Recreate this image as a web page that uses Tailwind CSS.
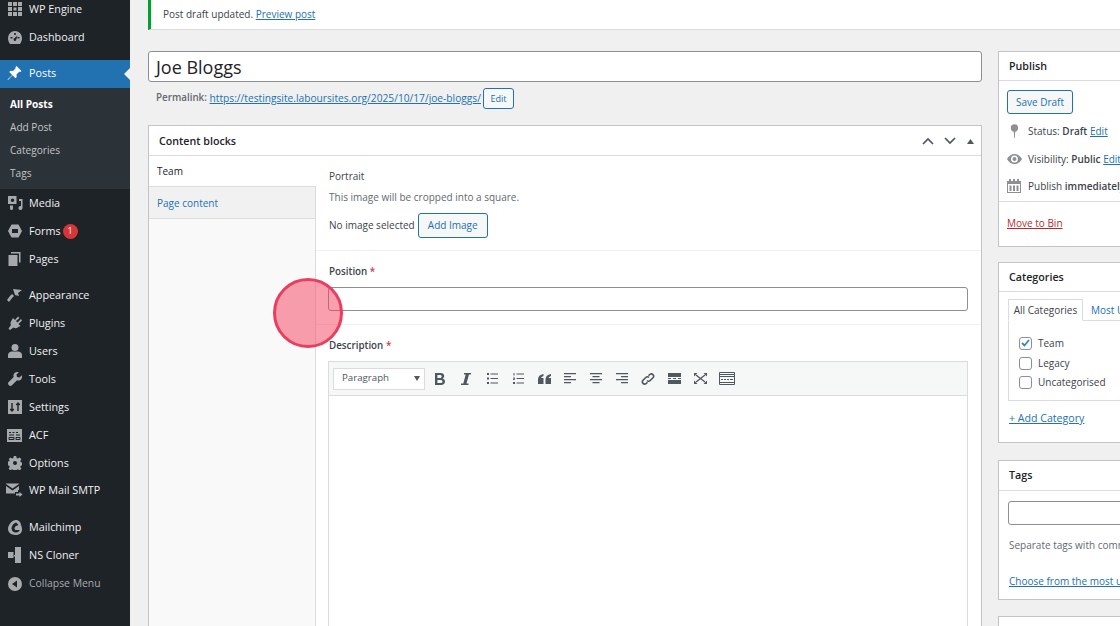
<!DOCTYPE html>
<html lang="en">
<head>
  <meta charset="UTF-8" />
  <title>Edit Post</title>
  <script src="https://cdn.jsdelivr.net/npm/@tailwindcss/browser@4"></script>
</head>
<body class="bg-[#f0f0f1] h-[626px] w-[1120px] overflow-hidden relative font-['Open_Sans',sans-serif] text-[10px] text-[#3c434a]">
<div class="flex h-[626px]">
  <!-- Sidebar -->
  <aside class="w-[130px] shrink-0 bg-[#1d2327] text-[#f0f0f1] text-[10.800px] overflow-hidden">
    <div class="-mt-[5px]">
      <div class="flex items-center h-[28px]"><span class="w-[29px] flex justify-center"><svg width="14" height="14" viewBox="0 0 14 14" fill="#a7aaad"><path d="M0 0h4v4H0zM5 0h4v4H5zM10 0h4v4h-4zM0 5h4v4H0zM10 5h4v4h-4zM0 10h4v4H0zM5 10h4v4H5zM10 10h4v4h-4zM5.500 5.500h3v3h-3z"/></svg></span>WP Engine</div>
      <div class="flex items-center h-[28px]"><span class="w-[29px] flex justify-center"><svg width="14" height="13" viewBox="0 0 14 13" fill="#a7aaad"><path fill-rule="evenodd" d="M7 0a7 7 0 0 0-7 7c0 2.300.8 4.300 2 6h10c1.200-1.700 2-3.700 2-6a7 7 0 0 0-7-7zM6.200 2v2h1.600V2zM2.500 6v1.500h2V6zM9.500 6v1.500h2V6zM7 10a1.500 1.500 0 0 1-1-2.600L9.500 4.500 8.300 8.400A1.500 1.500 0 0 1 7 10z"/></svg></span>Dashboard</div>
    </div>
    <div class="mt-[9px] h-[28px] pb-[1px] bg-[#2271b1] text-white flex items-center relative"><span class="w-[29px] flex justify-center"><svg width="15" height="15" viewBox="0 0 15 15" fill="#fff"><path d="M9.500 0l5 5-1.300 1-1-.3-2.700 2.700.2 2.600-1.200 1.200-3-3L1 14l-.5-.5 4.700-4.500-3-3 1.200-1.200 2.600.2L8.700 2.300l-.3-1z"/></svg></span>Posts<span class="absolute right-0 top-[8px] w-0 h-0 border-y-[6px] border-y-transparent border-r-[6px] border-r-[#f0f0f1]"></span></div>
    <div class="bg-[#2c3338] h-[101px] pt-[5px] pl-[10px] text-[#c3c4c7] text-[10.100px] flex flex-col">
      <div class="h-[23px] flex items-center font-bold text-white">All Posts</div>
      <div class="h-[23px] flex items-center">Add Post</div>
      <div class="h-[23px] flex items-center">Categories</div>
      <div class="h-[23px] flex items-center">Tags</div>
    </div>
    <div class="flex items-center h-[28px]"><span class="w-[29px] flex justify-center"><svg width="16" height="14" viewBox="0 0 16 14" fill="#a7aaad"><path d="M1 0h3l1-1h2l1 1h1.500v8H1zM5.500 2.500a1.800 1.800 0 1 0 0 3.600 1.800 1.800 0 0 0 0-3.600zM12 3h3.500v9a2 2 0 1 1-1.500-2V5h-2zM3 9.500h3v3a1.500 1.500 0 1 1-3 0z" fill-rule="evenodd"/></svg></span>Media</div>
    <div class="flex items-center h-[28px]"><span class="w-[29px] flex justify-center"><svg width="14" height="14" viewBox="0 0 14 14" fill="#a7aaad"><path fill-rule="evenodd" d="M3.500 .5h7L14 7l-3.500 6.500h-7L0 7zM4 5v4h6V5z"/></svg></span>Forms<span class="ml-[2px] w-[15px] h-[15px] rounded-full bg-[#d63638] text-white text-[9px] flex items-center justify-center">1</span></div>
    <div class="flex items-center h-[28px]"><span class="w-[29px] flex justify-center"><svg width="13" height="14" viewBox="0 0 13 14" fill="#a7aaad"><path d="M3 0h9.500v10.500H11V1.500H3zM.5 3h9v11h-9z"/></svg></span>Pages</div>
    <div class="mt-[8px] flex items-center h-[28px]"><span class="w-[29px] flex justify-center"><svg width="15" height="14" viewBox="0 0 15 14" fill="#a7aaad"><path d="M6 1l9 1-4 3 1 3-4-1zM5 6l2 2-2 2-3 4-2-2 3-4z"/></svg></span>Appearance</div>
    <div class="flex items-center h-[28px]"><span class="w-[29px] flex justify-center"><svg width="14" height="14" viewBox="0 0 14 14" fill="#a7aaad"><path d="M5 2l2 2 3-3.500 1.500 1.500L8 5l1.500 1.500L13 3l1 1.500L10.500 8l2 2-2 1c-2 1.500-4 1.500-5 .5L2 14l-1.500-1.500L3 9c-1-1.500-.5-3 .5-4.500z"/></svg></span>Plugins</div>
    <div class="flex items-center h-[28px]"><span class="w-[29px] flex justify-center"><svg width="14" height="14" viewBox="0 0 14 14" fill="#a7aaad"><circle cx="7" cy="3.500" r="3.500"/><path d="M0 14v-3c0-2 2-3.500 4-3.500h6c2 0 4 1.500 4 3.500v3z"/></svg></span>Users</div>
    <div class="flex items-center h-[28px]"><span class="w-[29px] flex justify-center"><svg width="14" height="14" viewBox="0 0 14 14" fill="#a7aaad"><path d="M13.800 3.200L11.500 5.500 9 5 8.500 2.500 10.800.2C9-.4 7 .2 6 1.700c-.7 1-.7 2.300-.3 3.300L.5 10.300c-.6.700-.6 1.800 0 2.500l.7.700c.7.600 1.800.6 2.500 0L9 8.300c1 .4 2.300.4 3.300-.3 1.500-1 2.100-3 1.500-4.800z"/></svg></span>Tools</div>
    <div class="flex items-center h-[28px]"><span class="w-[29px] flex justify-center"><svg width="14" height="14" viewBox="0 0 14 14"><path d="M0 0h14v14H0z" fill="#a7aaad"/><path d="M4 3v8M2.300 9L4 11l1.700-2M10 11V3M8.300 5L10 3l1.700 2" stroke="#1d2327" stroke-width="1.400" fill="none"/></svg></span>Settings</div>
    <div class="flex items-center h-[28px]"><span class="w-[29px] flex justify-center"><svg width="15" height="13" viewBox="0 0 15 13"><path d="M0 0h15v13H0z" fill="#a7aaad"/><path d="M2 3.500h2M5.500 3.500h2M9 3.500h2M2 6h5M9 6h4M2 8.500h5v2H2zM9 8.500h4v2H9z" stroke="#1d2327" stroke-width="1" fill="none"/></svg></span>ACF</div>
    <div class="flex items-center h-[28px]"><span class="w-[29px] flex justify-center"><svg width="14" height="14" viewBox="0 0 14 14" fill="#a7aaad"><path fill-rule="evenodd" d="M5.800 0h2.400l.4 2 1.300.6L11.700 1.500l1.700 1.700-1.100 1.800.6 1.300 2.100.5v2.400l-2.100.4-.6 1.300 1.100 1.800-1.700 1.700-1.800-1.100-1.300.6-.4 2.100H5.800l-.4-2.100-1.300-.6-1.800 1.100-1.700-1.700 1.100-1.800-.6-1.300-2.100-.4V5.800l2.100-.5.600-1.300L.6 3.200l1.700-1.700 1.800 1.100 1.300-.6zM7 5a2 2 0 1 0 0 4 2 2 0 0 0 0-4z"/></svg></span>Options</div>
    <div class="-mt-[1px] flex items-center h-[28px]"><span class="w-[29px] flex justify-center"><svg width="17" height="14" viewBox="0 0 17 14" fill="#a7aaad"><path d="M0 1l6.500 4.500L13 1v-.5H0zM0 3v7.500h9V9h3V7h1V3L6.500 7.500z"/><path d="M10 10.500h3.500V9l3 2.500-3 2.500v-1.500H10z"/></svg></span>WP Mail SMTP</div>
    <div class="mt-[9px] flex items-center h-[28px]"><span class="w-[29px] flex justify-center"><svg width="14" height="15" viewBox="0 0 14 15" fill="#a7aaad"><path fill-rule="evenodd" d="M8 0c2 0 5 2 5 5 1 2 1 4 1 5 0 3-3 5-6.500 5C3 15 0 12 0 9c0-4 4-9 8-9zM8 2.500C6 3 4 5 3.500 8c0 2.500 1.500 4.500 4.500 4.500 2 0 3.500-1 3.500-2.500H8C6.500 10 6 8 7 7s3-2 3.500-1.500C10 4 9 3 8 2.500z"/></svg></span>Mailchimp</div>
    <div class="flex items-center h-[28px]"><span class="w-[29px] flex justify-center"><svg width="13" height="16" viewBox="0 0 13 16" fill="#a7aaad"><path d="M7 0h6v16H7V9.500H6V8h1zM0 5h5.500v6H0z"/></svg></span>NS Cloner</div>
    <div class="flex items-center h-[28px] pt-[1px] text-[#a7aaad] text-[10.400px]"><span class="w-[29px] flex justify-center"><svg width="14" height="14" viewBox="0 0 14 14" fill="#a7aaad"><path fill-rule="evenodd" d="M7 0a7 7 0 1 1 0 14A7 7 0 0 1 7 0zm2 3.500L4 7l5 3.500z"/></svg></span>Collapse Menu</div>
  </aside>

  <!-- Main -->
  <main class="w-[990px] shrink-0 pl-[18px] overflow-hidden">
    <div class="w-[972px] h-[30px] bg-white border-l-[3px] border-l-[#00a32a] border-b border-b-[#dcdcde] flex items-center pl-[12px]">Post draft updated.&nbsp;<a class="text-[#2271b1] underline">Preview post</a></div>
    <div class="flex mt-[21px] items-start">
      <div class="w-[834px] shrink-0">
        <div class="h-[31px] bg-white border border-[#8c8f94] rounded-[3px] flex items-center pl-[7px] text-[#1d2327] text-[18px] leading-none">Joe Bloggs</div>
        <div class="h-[25px] mt-[4px] flex items-center pl-[8px] text-[10.200px] whitespace-nowrap">
          <span class="font-semibold text-[9.800px] text-[#646970]">Permalink:</span>&nbsp;<a class="text-[#2271b1] underline">https://testingsite.laboursites.org/2025/10/17/joe-bloggs/</a>
          <span class="ml-[2px] h-[21px] w-[31px] border border-[#2271b1] rounded-[3px] bg-[#f6f7f7] text-[#2271b1] text-[9px] flex items-center justify-center">Edit</span>
        </div>
        <!-- Content blocks -->
        <section class="mt-[14px] bg-white border border-[#c3c4c7] h-[520px]">
          <div class="h-[30px] pt-[1px] border-b border-[#dcdcde] flex items-center pl-[10px] pr-[7px] font-semibold text-[#1d2327] text-[10.700px]">
            <span class="flex-1">Content blocks</span>
            <svg class="mr-[10px]" width="12" height="8" viewBox="0 0 12 8" fill="none" stroke="#50575e" stroke-width="1.700"><path d="M1 7l5-5 5 5"/></svg>
            <svg class="mr-[11px]" width="12" height="8" viewBox="0 0 12 8" fill="none" stroke="#50575e" stroke-width="1.700"><path d="M1 1l5 5 5-5"/></svg>
            <svg width="7" height="5" viewBox="0 0 7 5" fill="#50575e"><path d="M3.500 0L7 5H0z"/></svg>
          </div>
          <div class="flex h-[489px]">
            <div class="w-[167px] shrink-0 bg-[#f9f9f9] border-r border-[#dcdcde]">
              <div class="h-[30px] pt-[1px] bg-white w-[167px] pl-[8px] flex items-center text-[#1d2327]">Team</div>
              <div class="h-[33px] pt-[1px] bg-[#f1f1f1] border-y border-[#dcdcde] pl-[8px] flex items-center text-[#2271b1]">Page content</div>
            </div>
            <div class="flex-1 min-w-0">
              <div class="h-[95px] border-b border-[#f0f0f1] pl-[13px] pt-[12px]">
                <div class="font-medium leading-[16px]">Portrait</div>
                <div class="mt-[5px] leading-[16px] text-[#646970]">This image will be cropped into a square.</div>
                <div class="mt-[8px] flex items-center">No image selected<span class="ml-[3px] h-[25px] w-[70px] border border-[#2271b1] rounded-[3px] bg-[#f6f7f7] text-[#2271b1] flex items-center justify-center">Add Image</span></div>
              </div>
              <div class="h-[74px] border-b border-[#f0f0f1] pl-[12px] pr-[13px] pt-[13px]">
                <div class="font-semibold text-[9.800px] leading-[16px] pl-[1px]">Position <span class="text-[#d63638]">*</span></div>
                <div class="mt-[7px] h-[24px] bg-white border border-[#8c8f94] rounded-[3px]"></div>
              </div>
              <div class="pl-[12px] pr-[13px] pt-[13px]">
                <div class="font-semibold text-[9.800px] leading-[16px] pl-[1px]">Description <span class="text-[#d63638]">*</span></div>
                <div class="mt-[7px] h-[300px] border border-[#dcdcde] bg-white">
                  <div class="h-[34px] bg-[#f6f7f7] border-b border-[#dcdcde] flex items-center pl-[4px]">
                    <div class="w-[92px] h-[22px] bg-white border border-[#dcdcde] flex items-center pl-[8px] text-[9.700px] text-[#50575e]">Paragraph<span class="ml-auto mr-[4px] w-0 h-0 border-x-[3.500px] border-x-transparent border-t-[5px] border-t-[#50575e]"></span></div>
                    <div class="flex ml-[2px]">
                      <span class="w-[26px] h-[22px] flex items-center justify-center"><svg width="10" height="12" viewBox="0 0 10 12" fill="#50575e"><path fill-rule="evenodd" d="M0 0h5.500c2.300 0 3.700 1.200 3.700 3 0 1.200-.6 2.100-1.700 2.600C9 6 10 7.100 10 8.600 10 10.700 8.400 12 6 12H0zM2.400 2v3h2.700c1 0 1.600-.6 1.600-1.500S6.100 2 5.100 2zM2.400 6.900V10h3.100c1.200 0 2-.6 2-1.600s-.8-1.500-2-1.500z"/></svg></span>
                      <span class="w-[26px] h-[22px] flex items-center justify-center"><svg width="10" height="12" viewBox="0 0 10 12" fill="#50575e"><path d="M3 0h7v1.500H8L5.500 10.500H7.500V12H0v-1.500h2.300L4.700 1.500H3z"/></svg></span>
                      <span class="w-[26px] h-[22px] flex items-center justify-center"><svg width="11" height="11" viewBox="0 0 11 11" fill="#50575e"><path d="M0 0h2v2H0zM0 4.500h2v2H0zM0 9h2v2H0zM3.500 .5H11v1H3.500zM3.500 5H11v1H3.500zM3.500 9.500H11v1H3.500z"/></svg></span>
                      <span class="w-[26px] h-[22px] flex items-center justify-center"><svg width="11" height="11" viewBox="0 0 11 11" fill="#50575e"><path d="M.5 0h1v2.500h-1zM0 4.500h2v.7l-1 1h1V7H0v-.7l1-1H0zM0 9h2v2H0zM3.500 .5H11v1H3.500zM3.500 5H11v1H3.500zM3.500 9.500H11v1H3.500z"/></svg></span>
                      <span class="w-[26px] h-[22px] flex items-center justify-center"><svg width="13" height="10" viewBox="0 0 13 10" fill="#50575e"><path d="M5.500 0v2C4 2.500 3.300 3.200 3 4h2.500v6H0V5.500C0 2.500 2 .5 5.500 0zM13 0v2c-1.500.5-2.200 1.200-2.500 2H13v6H7.500V5.500C7.500 2.500 9.500 .5 13 0z"/></svg></span>
                      <span class="w-[26px] h-[22px] flex items-center justify-center"><svg width="12" height="11" viewBox="0 0 12 11" fill="#50575e"><path d="M0 0h12v1.200H0zM0 3h7v1.200H0zM0 6h12v1.200H0zM0 9h7v1.200H0z"/></svg></span>
                      <span class="w-[26px] h-[22px] flex items-center justify-center"><svg width="12" height="11" viewBox="0 0 12 11" fill="#50575e"><path d="M0 0h12v1.200H0zM2.500 3h7v1.200h-7zM0 6h12v1.200H0zM2.500 9h7v1.200h-7z"/></svg></span>
                      <span class="w-[26px] h-[22px] flex items-center justify-center"><svg width="12" height="11" viewBox="0 0 12 11" fill="#50575e"><path d="M0 0h12v1.200H0zM5 3h7v1.200H5zM0 6h12v1.200H0zM5 9h7v1.200H5z"/></svg></span>
                      <span class="w-[26px] h-[22px] flex items-center justify-center"><svg width="14" height="14" viewBox="0 0 14 14" fill="none" stroke="#50575e" stroke-width="1.600"><path d="M6 8.500c1 1 2.300 1 3.200 0l3-3a2.300 2.300 0 0 0-3.200-3.200L7.500 3.800M8 5.500c-1-1-2.300-1-3.200 0l-3 3a2.300 2.300 0 0 0 3.200 3.200l1.500-1.500"/></svg></span>
                      <span class="w-[26px] h-[22px] flex items-center justify-center"><svg width="13" height="11" viewBox="0 0 13 11" fill="#50575e"><path d="M0 0h13v4H0zM0 7h13v4H0zM0 5h3v1H0zM5 5h3v1H5zM10 5h3v1h-3z"/></svg></span>
                      <span class="w-[26px] h-[22px] flex items-center justify-center"><svg width="13" height="11" viewBox="0 0 13 11" fill="none" stroke="#50575e" stroke-width="1.300"><path d="M2 2l9 7M11 2L2 9"/><path d="M0 0h3.500L0 3.500zM13 0H9.500L13 3.500zM0 11h3.500L0 7.500zM13 11H9.500L13 7.500z" fill="#50575e" stroke="none"/></svg></span>
                      <span class="w-[26px] h-[22px] flex items-center justify-center ml-[1px]"><svg width="16" height="13" viewBox="0 0 16 13" fill="none" stroke="#50575e"><path d="M.5.5h15v12H.5z"/><path d="M1 2.500h14M1 4.500h14M1 10.500h14" stroke-width="1.200"/><path d="M2 7.500h2M5 7.500h2M8 7.500h2M11 7.500h3" stroke-width="1.200"/></svg></span>
                    </div>
                  </div>
                </div>
              </div>
            </div>
          </div>
        </section>
      </div>

      <!-- Right column -->
      <div class="ml-[16px] w-[200px] shrink-0">
        <section class="h-[196px] bg-white border border-[#c3c4c7]">
          <div class="h-[29px] border-b border-[#dcdcde] flex items-center pl-[10px] font-semibold text-[#1d2327] text-[10.700px]">Publish</div>
          <div class="h-[121px] pl-[8px] pt-[9px] border-b border-[#dcdcde]">
            <div class="h-[24px] w-[66px] border border-[#2271b1] rounded-[3px] bg-[#f6f7f7] text-[#2271b1] flex items-center justify-center">Save Draft</div>
            <div class="mt-[7px] h-[20px] flex items-center whitespace-nowrap"><span class="w-[21px] flex pl-[3px]"><svg width="9" height="14" viewBox="0 0 9 14" fill="#8c8f94"><circle cx="4.500" cy="4" r="3.700"/><path d="M3.700 7h1.600l-.5 7h-.6z"/></svg></span>Status:&nbsp;<b class="font-semibold">Draft</b>&nbsp;<a class="text-[#2271b1] underline">Edit</a></div>
            <div class="mt-[8px] h-[20px] flex items-center whitespace-nowrap"><span class="w-[21px] flex"><svg width="15" height="10" viewBox="0 0 15 10" fill="#8c8f94"><path fill-rule="evenodd" d="M7.500 0c3.200 0 6 2 7.500 5-1.500 3-4.300 5-7.500 5S1.500 8 0 5c1.500-3 4.300-5 7.500-5zm0 1.500a3.500 3.500 0 1 0 0 7 3.500 3.500 0 0 0 0-7zM7.500 3a2 2 0 1 1 0 4 2 2 0 0 1 0-4z"/></svg></span>Visibility:&nbsp;<b class="font-semibold">Public</b>&nbsp;<a class="text-[#2271b1] underline">Edit</a></div>
            <div class="mt-[7px] h-[20px] flex items-center whitespace-nowrap"><span class="w-[21px] flex"><svg width="14" height="14" viewBox="0 0 14 14" fill="#8c8f94"><path fill-rule="evenodd" d="M2 0h2v2h2V0h2v2h2V0h2v2h2v12H0V2h2zM1 5v8h12V5zM2.500 6.500h2v5.500h-2zM6 6.500h2v5.500H6zM9.500 6.500h2v5.500h-2z"/></svg></span>Publish&nbsp;<b class="font-semibold">immediately</b></div>
          </div>
          <div class="pl-[8px] pt-[14px]"><a class="text-[#b32d2e] underline">Move to Bin</a></div>
        </section>
        <section class="mt-[15px] h-[181px] bg-white border border-[#c3c4c7]">
          <div class="h-[29px] border-b border-[#dcdcde] flex items-center pl-[10px] font-semibold text-[#1d2327] text-[10.700px]">Categories</div>
          <div class="pl-[9px] pt-[7px]">
            <div class="flex h-[22px] items-end">
              <div class="h-[22px] w-[75px] border border-[#dcdcde] border-b-white bg-white flex items-center justify-center relative z-10">All Categories</div>
              <div class="h-[22px] pl-[8px] flex items-center text-[#2271b1] whitespace-nowrap">Most Used</div>
            </div>
            <div class="-mt-[1px] h-[81px] border border-[#dcdcde] pl-[10px] pt-[12px]">
              <div class="h-[20px] flex items-center"><span class="w-[13px] h-[13px] border border-[#8c8f94] rounded-[3px] flex items-center justify-center"><svg width="9" height="8" viewBox="0 0 9 8" fill="none" stroke="#3582c4" stroke-width="1.800"><path d="M1 4l2.500 2.500L8 1"/></svg></span><span class="ml-[6px]">Team</span></div>
              <div class="h-[20px] flex items-center"><span class="w-[13px] h-[13px] border border-[#8c8f94] rounded-[3px]"></span><span class="ml-[6px]">Legacy</span></div>
              <div class="h-[19px] flex items-center"><span class="w-[13px] h-[13px] border border-[#8c8f94] rounded-[3px]"></span><span class="ml-[6px]">Uncategorised</span></div>
            </div>
            <div class="mt-[10px] ml-[1px]"><a class="text-[#2271b1] underline text-[10.600px]">+ Add Category</a></div>
          </div>
        </section>
        <section class="mt-[17px] h-[140px] bg-white border border-[#c3c4c7]">
          <div class="h-[30px] border-b border-[#dcdcde] flex items-center pl-[10px] font-semibold text-[#1d2327] text-[10.700px]">Tags</div>
          <div class="pl-[9px] pt-[10px]">
            <div class="h-[24px] border border-[#8c8f94] rounded-[3px] bg-white"></div>
            <div class="mt-[12px] ml-[1px] leading-[16px] text-[#646970] whitespace-nowrap">Separate tags with commas</div>
            <div class="mt-[21px] ml-[1px] text-[#2271b1] underline whitespace-nowrap">Choose from the most used tags</div>
          </div>
        </section>
        <section class="mt-[16px] h-[40px] bg-white border border-[#c3c4c7]"></section>
      </div>
    </div>
  </main>
</div>

<!-- Click marker -->
<div class="absolute left-[273px] top-[278px] w-[70px] h-[70px] rounded-full bg-[#f43f5e]/50 border-[3px] border-[#e83e5f]"></div>
</body>
</html>
